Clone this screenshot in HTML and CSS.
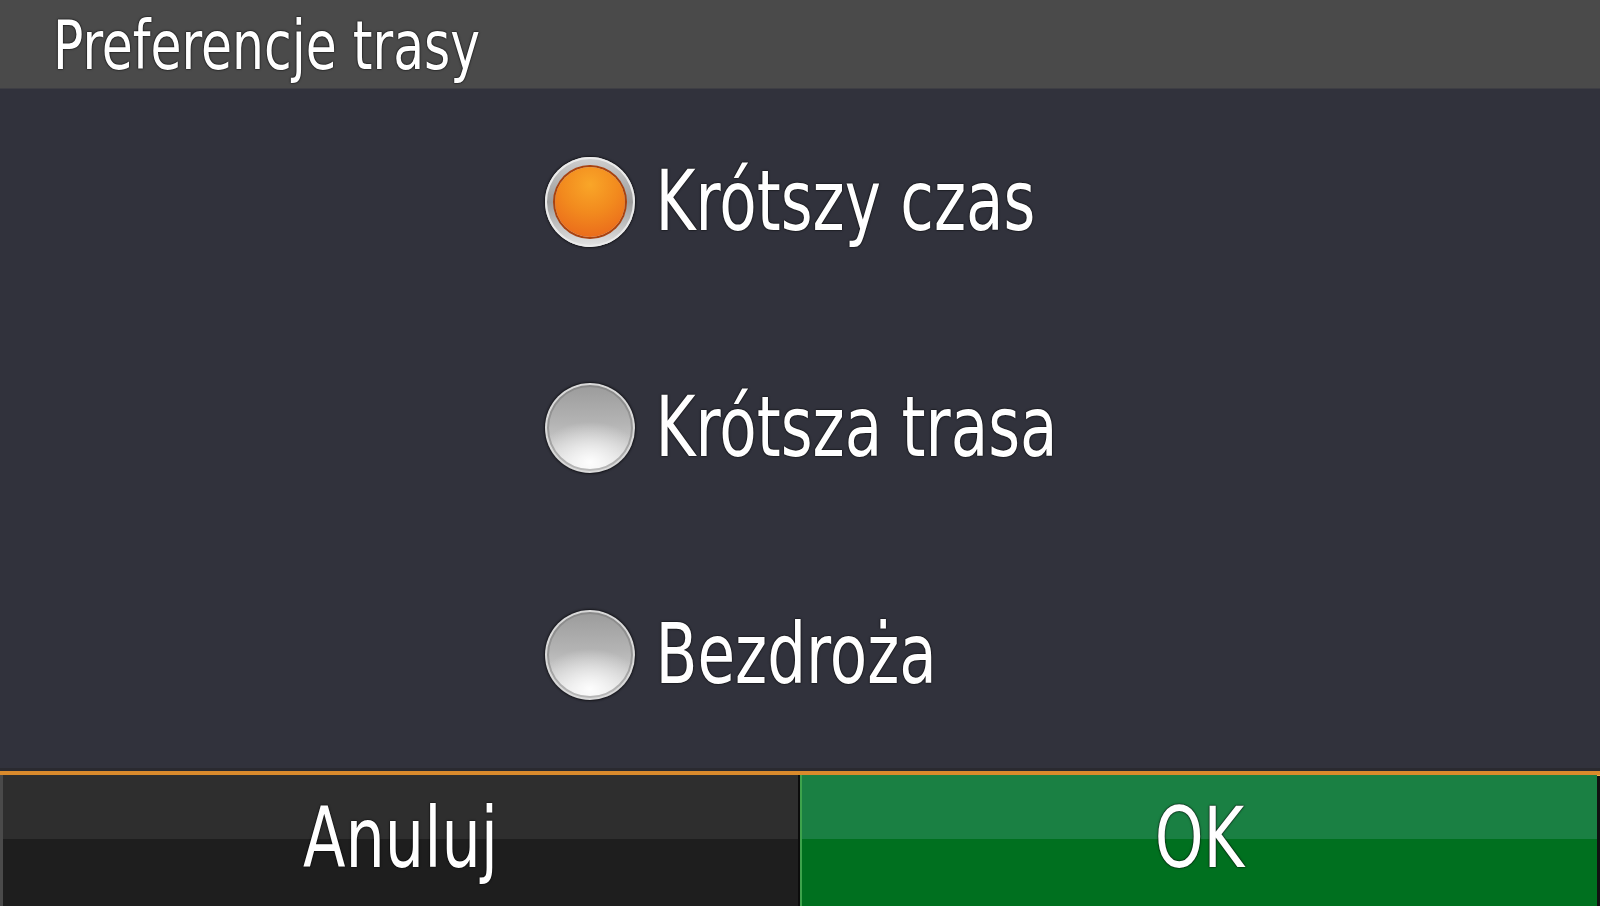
FILE: index.html
```html
<!DOCTYPE html>
<html lang="pl">
<head>
<meta charset="utf-8">
<title>Preferencje trasy</title>
<link rel="stylesheet" href="styles.css">
</head>
<body>
<div class="screen">
  <header class="title-bar"><span class="txt title">Preferencje trasy</span></header>
  <main class="options">
    <div class="option-list">
      <div class="option"><span class="radio on"></span><span class="txt label">Krótszy czas</span></div>
      <div class="option"><span class="radio"></span><span class="txt label">Krótsza trasa</span></div>
      <div class="option"><span class="radio"></span><span class="txt label">Bezdroża</span></div>
    </div>
  </main>
  <footer class="actions">
    <div class="btn cancel"><span class="txt btn-label">Anuluj</span></div>
    <div class="btn ok"><span class="txt btn-label">OK</span></div>
  </footer>
</div>
</body>
</html>
```
FILE: styles.css
```css
* { box-sizing: border-box; }
html, body { margin: 0; padding: 0; }
body {
  width: 1600px;
  height: 906px;
  overflow: hidden;
  background: #31323c;
  font-family: "DejaVu Sans Condensed", "DejaVu Sans", sans-serif;
  font-stretch: condensed;
  color: #fff;
}
.screen {
  width: 1600px;
  height: 906px;
  display: flex;
  flex-direction: column;
}
.txt {
  display: inline-block;
  transform: scaleY(1.22);
  text-shadow: 0 0 2px rgba(0,0,0,0.9), 0 0 1px #000;
  line-height: 1;
  white-space: nowrap;
}
.title-bar {
  height: 89px;
  flex: none;
  background: #4a4a4a;
  display: flex;
  align-items: center;
  padding-left: 53px;
  padding-top: 3px;
  border-bottom: 1px solid #3e3e44;
}
.title { font-size: 56px; }
.options {
  flex: 1;
  display: flex;
  justify-content: center;
  background: #31323c;
  border-bottom: 3px solid #2a2a30;
}
.option-list {
  display: flex;
  flex-direction: column;
  margin-left: 2px;
}
.option {
  flex: 1;
  display: flex;
  align-items: center;
  gap: 21px;
}
.label { font-size: 68px; }
.radio {
  position: relative;
  flex: none;
  width: 90px;
  height: 90px;
  border-radius: 50%;
  background:
    radial-gradient(ellipse 60% 45% at 50% 88%, rgba(255,255,255,0.95) 0%, rgba(255,255,255,0) 100%),
    linear-gradient(180deg, #9a9a9a 0%, #b4b4b4 45%, #d2d2d2 80%, #e8e8e8 100%);
  box-shadow: inset 0 0 0 2px #d9d9d9, inset 0 0 0 4px rgba(120,120,120,0.5), 0 0 2px 1px #15151a;
}
.radio.on {
  background: linear-gradient(180deg, #d0d0d0 0%, #9c9c9c 50%, #e4e4e4 100%);
  box-shadow: inset 0 0 0 2px #eaeaea, 0 0 2px 1px #15151a;
}
.radio.on::after {
  content: "";
  position: absolute;
  left: 10px;
  top: 10px;
  width: 70px;
  height: 70px;
  border-radius: 50%;
  background: radial-gradient(circle at 50% 25%, #f9a628 0%, #f28a1e 45%, #e8601a 100%);
  box-shadow: 0 0 0 2px #a9420f;
}
.actions {
  height: 135px;
  flex: none;
  display: flex;
  border-top: 4px solid #d98a2c;
  box-shadow: inset 0 1px 0 #f0b050;
  background: #111;
}
.btn {
  display: flex;
  align-items: center;
  justify-content: center;
  padding-bottom: 4px;
}
.btn-label { font-size: 69px; }
.cancel {
  width: 800px;
  background: linear-gradient(180deg, #2e2e2e 0%, #2e2e2e 49%, #1e1e1e 49%, #1e1e1e 100%);
  border-left: 3px solid #4a4a4a;
  border-right: 2px solid #0c0c0c;
}
.ok {
  flex: 1;
  margin-right: 3px;
  background: linear-gradient(180deg, #1a8043 0%, #1a8043 49%, #00701f 49%, #00701f 100%);
  border-left: 2px solid #3ea34c;
}
```
